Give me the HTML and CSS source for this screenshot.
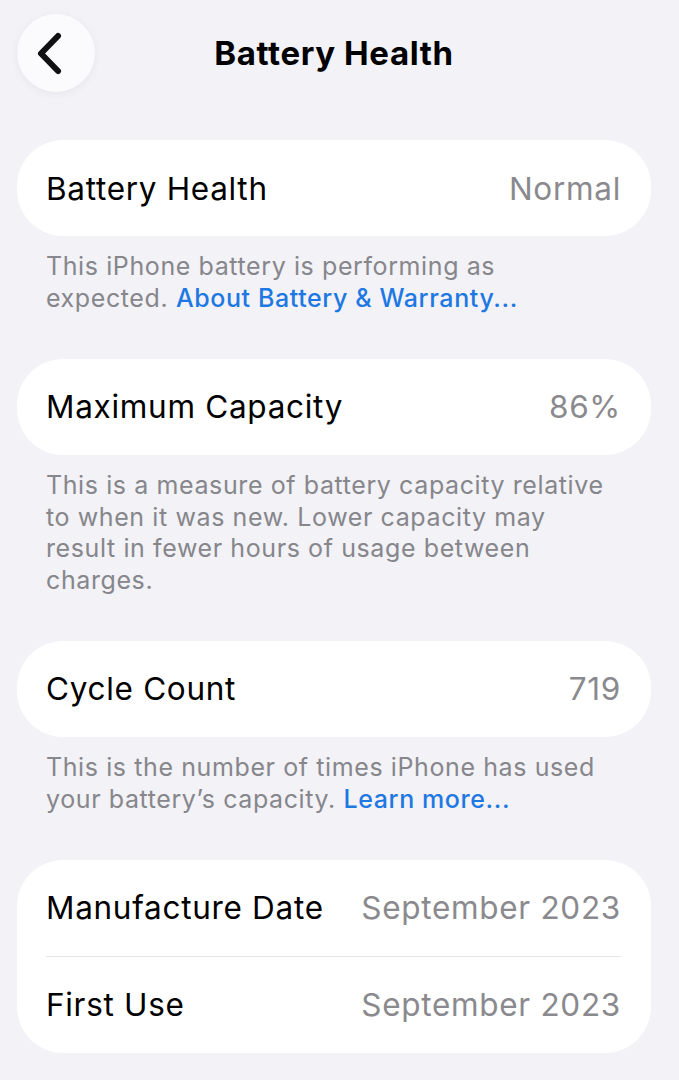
FILE: index.html
```html
<!DOCTYPE html>
<html lang="en">
<head>
<meta charset="utf-8">
<title>Battery Health</title>
<link rel="stylesheet" href="styles.css">
</head>
<body>
<header class="nav">
  <button class="back" aria-label="Back">
    <svg width="40" height="50" viewBox="0 0 40 50" aria-hidden="true">
      <path d="M25 8 L8 25.5 L25 43" fill="none" stroke="#111114" stroke-width="6" stroke-linecap="round" stroke-linejoin="round"/>
    </svg>
  </button>
  <h1 class="title">Battery Health</h1>
  <span class="spacer"></span>
</header>

<main class="content">
  <section class="card">
    <div class="row"><span class="label">Battery Health</span><span class="value">Normal</span></div>
  </section>
  <p class="note">This iPhone battery is performing as<br>expected. <a class="link" href="#">About Battery &amp; Warranty...</a></p>

  <section class="card">
    <div class="row"><span class="label">Maximum Capacity</span><span class="value">86%</span></div>
  </section>
  <p class="note">This is a measure of battery capacity relative<br>to when it was new. Lower capacity may<br>result in fewer hours of usage between<br>charges.</p>

  <section class="card">
    <div class="row"><span class="label">Cycle Count</span><span class="value">719</span></div>
  </section>
  <p class="note">This is the number of times iPhone has used<br>your battery’s capacity. <a class="link" href="#">Learn more...</a></p>

  <section class="card">
    <div class="row"><span class="label">Manufacture Date</span><span class="value">September 2023</span></div>
    <div class="divider"></div>
    <div class="row"><span class="label">First Use</span><span class="value">September 2023</span></div>
  </section>
</main>
</body>
</html>
```

FILE: styles.css
```css
* { box-sizing: border-box; }

html, body {
  margin: 0;
  padding: 0;
  background: #f2f2f7;
}

body {
  font-family: Inter, "Noto Sans", "Liberation Sans", sans-serif;
  color: #000;
  padding: 0 28px 0 17px;
  height: 1080px;
  overflow: hidden;
}

.nav {
  display: grid;
  grid-template-columns: 78px 1fr 78px;
  align-items: center;
  padding-top: 14px;
  height: 140px;
  align-content: start;
}

.back {
  width: 78px;
  height: 78px;
  border-radius: 50%;
  border: none;
  padding: 0;
  background: #fbfbfd;
  box-shadow: 0 2px 10px rgba(0, 0, 0, 0.05);
  display: flex;
  align-items: center;
  justify-content: center;
}

.back svg {
  display: block;
  margin-right: 6px;
}

.title {
  margin: 0;
  text-align: center;
  font-size: 33px;
  font-weight: 700;
  letter-spacing: 0.6px;
}

.card {
  background: #fff;
  border-radius: 46px;
  padding: 0 30px 0 29px;
}

.row {
  height: 96px;
  display: flex;
  align-items: center;
  justify-content: space-between;
  font-size: 31.5px;
  letter-spacing: 0.7px;
}

.label { color: #000; }
.value { color: #8a8a8e; }

.divider {
  height: 1px;
  background: #e3e3e8;
}

.note {
  margin: 0 0 44.7px;
  padding: 15.3px 29px 0;
  font-size: 25px;
  line-height: 31.5px;
  color: #86868b;
  letter-spacing: 0.6px;
}

.link {
  color: #1e78e2;
  text-decoration: none;
  font-weight: 500;
}
```
